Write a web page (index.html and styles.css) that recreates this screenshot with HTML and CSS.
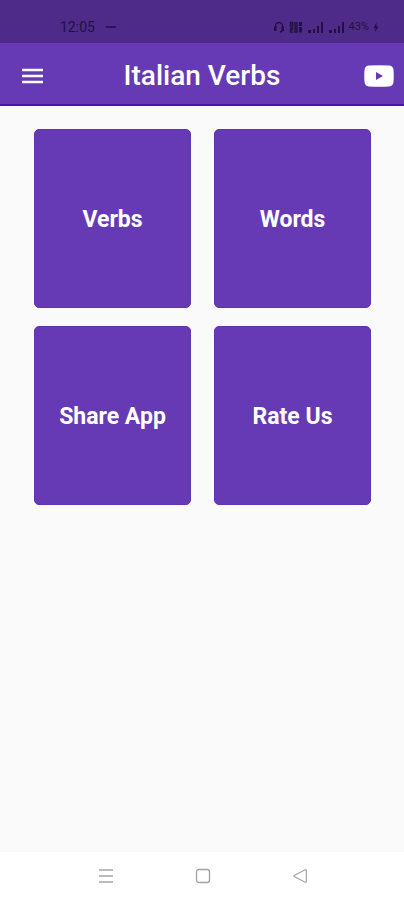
FILE: index.html
```
<!DOCTYPE html>
<html lang="en">
<head>
<meta charset="utf-8">
<meta name="viewport" content="width=device-width, initial-scale=1">
<title>Italian Verbs</title>
<link rel="stylesheet" href="styles.css">
</head>
<body>
<div class="status">
  <div class="status-group">
    <span class="clock">12:05</span>
    <svg width="12" height="4" viewBox="0 0 12 4" aria-hidden="true"><path d="M1 2h10" stroke="currentColor" stroke-width="1.500"/></svg>
  </div>
  <div class="status-group status-icons">
    <svg width="12" height="12" viewBox="0 0 12 12" aria-hidden="true"><path d="M2.500 9V5a3.500 3.500 0 0 1 7 0v4M9.500 9.500Q9 11 7 11" fill="none" stroke="currentColor" stroke-width="1.300"/><path d="M1 5.500h2.500V10H1zM8.500 5.500H11V10H8.500z" fill="currentColor"/></svg>
    <svg width="14" height="12" viewBox="0 0 14 12" aria-hidden="true"><path d="M1.500 6V1.500h2V6M6 1v4h2V1M1 7h2.500v1.500H1.500V11H4M6 7h2v4H6z" fill="none" stroke="currentColor" stroke-width="1.500"/><path d="M10 1h3v4h-3zM10 6h3v5.500h-3z" fill="currentColor"/></svg>
    <svg class="signal" width="16" height="12" viewBox="0 0 16 12" aria-hidden="true"><path d="M0 9h3v3H0zM5 8h2v4H5zM9 5h2v7H9zM13 1h2v11h-2z" fill="currentColor"/></svg>
    <svg class="signal" width="16" height="12" viewBox="0 0 16 12" aria-hidden="true"><path d="M0 9h3v3H0zM5 8h2v4H5zM9 5h2v7H9zM13 1h2v11h-2z" fill="currentColor"/></svg>
    <span class="battery">43%</span>
    <svg width="6" height="12" viewBox="0 0 6 12" aria-hidden="true"><path d="M3.500 1.500L0.500 7h2L2 11l3.500-5.500h-2z" fill="currentColor"/></svg>
  </div>
</div>
<header class="appbar">
  <button class="icon-button menu" type="button" aria-label="Menu">
    <svg width="22" height="16" viewBox="0 0 22 16"><path d="M0 2h21M0 8h21M0 14h21" stroke="currentColor" stroke-width="2.500"/></svg>
  </button>
  <h1 class="title">Italian Verbs</h1>
  <button class="icon-button video" type="button" aria-label="YouTube">
    <svg width="30" height="22" viewBox="0 0 30 22"><path fill-rule="evenodd" d="M5 .5Q15-.2 25 .5Q29 .7 29.500 5Q30 11 29.500 17Q29 21.200 25 21.500Q15 22.200 5 21.500Q1 21.200.5 17Q0 11 .5 5Q1 .7 5 .5zM12 7v8l7-4z" fill="currentColor"/></svg>
  </button>
</header>
<main class="tiles">
  <button class="tile" type="button">Verbs</button>
  <button class="tile" type="button">Words</button>
  <button class="tile" type="button">Share App</button>
  <button class="tile" type="button">Rate Us</button>
</main>
<nav class="navbar" aria-label="System">
  <button class="icon-button" type="button" aria-label="Recent apps">
    <svg width="16" height="16" viewBox="0 0 16 16"><path d="M1 2h14M1 8h14M1 14h14" stroke="currentColor" stroke-width="1.500"/></svg>
  </button>
  <button class="icon-button" type="button" aria-label="Home">
    <svg width="16" height="16" viewBox="0 0 16 16"><rect x="1.500" y="1.500" width="13" height="13" rx="2.500" fill="none" stroke="currentColor" stroke-width="1.400"/></svg>
  </button>
  <button class="icon-button" type="button" aria-label="Back">
    <svg width="16" height="16" viewBox="0 0 16 16"><path d="M13.200 1.800L2.200 7.500Q1.400 8 2.200 8.500L13.200 14.200Q14.300 14.500 14.300 13.500V2.500Q14.300 1.500 13.200 1.800z" fill="none" stroke="currentColor" stroke-width="1.200"/></svg>
  </button>
</nav>
</body>
</html>
```
FILE: styles.css
```
* {
  box-sizing: border-box;
}

body {
  margin: 0;
  min-height: 100vh;
  display: flex;
  flex-direction: column;
  background: #fafafa;
  font-family: Roboto, "Liberation Sans", sans-serif;
}

svg {
  display: block;
}

.status {
  height: 43px;
  padding: 10px 25px 0 60px;
  display: flex;
  align-items: center;
  justify-content: space-between;
  background: #4e2b88;
  color: #221044;
}

.status-group {
  display: flex;
  align-items: center;
  gap: 10px;
}

.status-icons {
  gap: 4px;
}

.clock {
  font-size: 14px;
  line-height: 16px;
}

.signal {
  margin-left: 1px;
}

.battery {
  font-size: 11px;
  line-height: 12px;
}

.appbar {
  height: 63px;
  padding: 4px 10px 0;
  display: grid;
  grid-template-columns: 1fr auto 1fr;
  align-items: center;
  background: #673ab5;
  border-bottom: 2px solid #4f12a8;
  color: #fff;
}

.icon-button {
  padding: 0;
  border: 0;
  background: none;
  color: inherit;
  cursor: pointer;
}

.menu {
  justify-self: start;
  margin-left: 12px;
}

.video {
  justify-self: end;
}

.title {
  margin: 0;
  font-size: 28px;
  line-height: 32px;
  font-weight: 500;
}

.tiles {
  flex: 1;
  padding: 23px 33px 23px 34px;
  display: grid;
  grid-template-columns: 1fr 1fr;
  grid-auto-rows: 179px;
  gap: 18px 23px;
}

.tile {
  padding: 2px 0 0;
  border: 1px solid #6033b3;
  border-radius: 5px;
  background: #673ab5;
  color: #fff;
  font: bold 23px/28px Roboto, "Liberation Sans", sans-serif;
  cursor: pointer;
}

.navbar {
  height: 48px;
  padding: 0 56px 0 57px;
  display: flex;
  justify-content: space-around;
  align-items: center;
  background: #fff;
  color: #a5a5a5;
}
```
